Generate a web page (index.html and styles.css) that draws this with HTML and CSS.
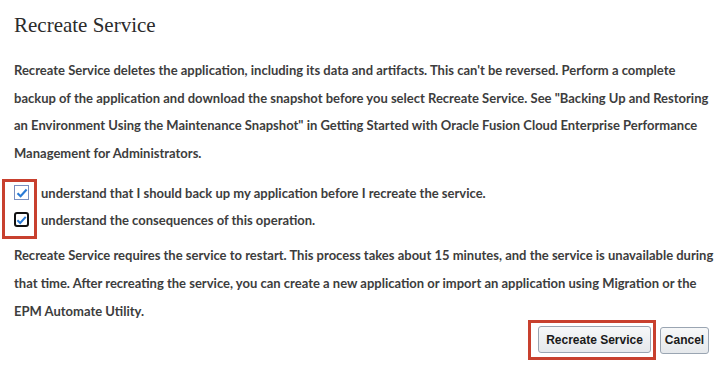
FILE: index.html
```html
<!DOCTYPE html>
<html lang="en">
<head>
    <meta charset="UTF-8">
    <title>Recreate Service</title>
    <link rel="stylesheet" href="styles.css">
</head>
<body>
    <div class="dialog">
        <h1 class="title">Recreate Service</h1>

        <p class="text">Recreate Service deletes the application, including its data and artifacts. This can't be reversed. Perform a complete backup of the application and download the snapshot before you select Recreate Service. See "Backing Up and Restoring an Environment Using the Maintenance Snapshot" in Getting Started with Oracle Fusion Cloud Enterprise Performance Management for Administrators.</p>

        <div class="checks">
            <div class="callout"></div>
            <label class="check-row">
                <span class="box">
                    <svg width="12" height="10" viewBox="0 0 12 10"><path d="M1.5 5.2 L4.6 8.2 L10.6 1.6" fill="none" stroke="#2a7bd6" stroke-width="2.2"/></svg>
                </span>
                <span>understand that I should back up my application before I recreate the service.</span>
            </label>
            <label class="check-row">
                <span class="box focused">
                    <svg width="12" height="10" viewBox="0 0 12 10"><path d="M1.5 5.2 L4.6 8.2 L10.6 1.6" fill="none" stroke="#2a7bd6" stroke-width="2.2"/></svg>
                </span>
                <span>understand the consequences of this operation.</span>
            </label>
        </div>

        <p class="text">Recreate Service requires the service to restart. This process takes about 15 minutes, and the service is unavailable during that time. After recreating the service, you can create a new application or import an application using Migration or the EPM Automate Utility.</p>

        <div class="buttonContainer">
            <span class="highlight">
                <button type="button" class="btn recreate">Recreate Service</button>
            </span>
            <button type="button" class="btn cancel">Cancel</button>
        </div>
    </div>
</body>
</html>
```

FILE: styles.css
```css
body {
    margin: 0;
    padding: 0;
    background: #fff;
    color: #3d3d3d;
    font-family: 'Lato', sans-serif;
}

.dialog {
    padding: 10px 0 0 14px;
    width: 701px;
}

.title {
    font-family: 'Liberation Serif', Georgia, serif;
    font-weight: normal;
    font-size: 21px;
    color: #2b2b2b;
    margin: 0 0 17px 0;
    line-height: 30px;
}

.text {
    font-size: 13px;
    font-weight: bold;
    line-height: 27.6px;
    margin: 0;
}

.checks {
    position: relative;
    padding: 12px 0 9px 0;
}

.callout {
    position: absolute;
    left: -12px;
    top: 12px;
    width: 29px;
    height: 54px;
    border: 3px solid #c8402e;
}

.check-row {
    display: flex;
    align-items: center;
    height: 27px;
    font-size: 13px;
    font-weight: bold;
    gap: 12px;
}

.box {
    box-sizing: border-box;
    width: 15px;
    height: 15px;
    border: 1px solid #7a8fbf;
    background: #fff;
    display: flex;
    align-items: center;
    justify-content: center;
}

.box.focused {
    border: 2px solid #111;
    border-radius: 3px;
}

.buttonContainer {
    display: flex;
    justify-content: flex-end;
    align-items: center;
    margin-top: -5px;
    padding-right: 6px;
    gap: 4px;
}

.highlight {
    border: 3px solid #c8402e;
    padding: 3px 2px 4px 7px;
    display: flex;
}

.btn {
    font-family: 'Liberation Sans', sans-serif;
    font-size: 12px;
    font-weight: bold;
    color: #1a1a1a;
    height: 27px;
    padding: 0;
    border: 1px solid #9aa5b2;
    border-radius: 3px;
    background: linear-gradient(#f7f8f9, #e5e8eb);
}

.recreate {
    width: 113px;
}

.cancel {
    width: 49px;
}
```
